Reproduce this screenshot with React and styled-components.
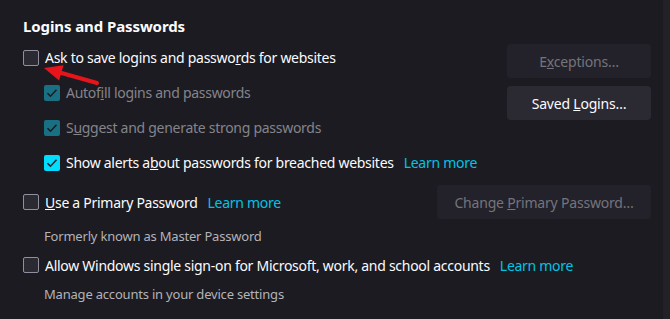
import React from 'react';
import styled, { createGlobalStyle } from 'styled-components';

const Global = createGlobalStyle`
  html, body {
    margin: 0;
    background: #1c1b22;
  }
  body {
    font-family: 'Noto Sans', 'Open Sans', sans-serif;
    color: #fbfbfe;
  }
`;

const Window = styled.div`
  display: flex;
  width: 670px;
  height: 319px;
  overflow: hidden;
  background: #1c1b22;
`;

const Main = styled.div`
  flex: 1;
  position: relative;
  box-sizing: border-box;
  padding: 15px 12px 0 23px;
`;

const Scrollbar = styled.div`
  width: 7px;
  background: #222226;
`;

const Heading = styled.h1`
  margin: 0;
  font-size: 15px;
  line-height: 22px;
  font-weight: 700;
  letter-spacing: -0.1px;
  color: #fbfbfe;
`;

const Section = styled.div`
  display: flex;
  justify-content: space-between;
  align-items: ${(p) => p.align || 'flex-start'};
  margin-top: ${(p) => p.top}px;
`;

const Options = styled.div`
  display: flex;
  flex-direction: column;
`;

const Row = styled.div`
  display: flex;
  align-items: center;
  height: ${(p) => p.h || 35}px;
  padding-left: ${(p) => (p.indent ? 21 : 0)}px;
`;

const Box = styled.span`
  box-sizing: border-box;
  width: 16px;
  height: 16px;
  flex: none;
  border-radius: 2px;
  margin-right: 6px;
  display: flex;
  align-items: center;
  justify-content: center;
  border: 1px solid ${(p) => (p.checked ? 'transparent' : '#8f8f9d')};
  background: ${(p) =>
    p.checked ? (p.disabled ? '#1a7083' : '#00ddff') : '#2b2a33'};
`;

const Label = styled.span`
  font-size: 14px;
  letter-spacing: -0.28px;
  color: ${(p) => (p.disabled ? '#85848b' : '#fbfbfe')};
  white-space: nowrap;
`;

const Link = styled.a`
  font-size: 14px;
  letter-spacing: -0.28px;
  color: #00c4e4;
  margin-left: 10px;
  text-decoration: none;
  white-space: nowrap;
`;

const Note = styled.div`
  font-size: 13px;
  letter-spacing: -0.2px;
  color: #b3b3b8;
  padding-left: 21px;
  height: ${(p) => p.h}px;
  display: flex;
  align-items: center;
`;

const Buttons = styled.div`
  display: flex;
  flex-direction: column;
  gap: 8px;
  margin-top: 4px;
`;

const Button = styled.button`
  box-sizing: border-box;
  width: ${(p) => p.w}px;
  height: 34px;
  border: none;
  border-radius: 4px;
  font-family: inherit;
  font-size: 14px;
  letter-spacing: -0.2px;
  background: ${(p) => (p.disabled ? '#23222b' : '#2b2a33')};
  color: ${(p) => (p.disabled ? '#75747b' : '#fbfbfe')};
  padding: 0;
`;

const Arrow = styled.svg`
  position: absolute;
  left: 38px;
  top: 60px;
`;

const Check = () => (
  <svg width="12" height="12" viewBox="0 0 12 12">
    <path d="M1.5 6.2 L4.5 9.2 L10.5 2.8" fill="none" stroke="#1c1b22" strokeWidth="1.6" />
  </svg>
);

const Checkbox = ({ checked, disabled }) => (
  <Box checked={checked} disabled={disabled}>
    {checked && <Check />}
  </Box>
);

const App = () => (
  <Window>
    <Global />
    <Main>
      <Heading>Logins and Passwords</Heading>
      <Section top={3}>
        <Options>
          <Row>
            <Checkbox />
            <Label>
              Ask to save logins and passwo<u>r</u>ds for websites
            </Label>
          </Row>
          <Row indent>
            <Checkbox checked disabled />
            <Label disabled>
              Autof<u>i</u>ll logins and passwords
            </Label>
          </Row>
          <Row indent>
            <Checkbox checked disabled />
            <Label disabled>
              S<u>u</u>ggest and generate strong passwords
            </Label>
          </Row>
          <Row indent>
            <Checkbox checked />
            <Label>
              Show alerts a<u>b</u>out passwords for breached websites
            </Label>
            <Link>Learn more</Link>
          </Row>
        </Options>
        <Buttons>
          <Button w={144} disabled>
            E<u>x</u>ceptions…
          </Button>
          <Button w={144}>
            Saved <u>L</u>ogins…
          </Button>
        </Buttons>
      </Section>
      <Section top={5} align="center">
        <Row h={34}>
          <Checkbox />
          <Label>
            <u>U</u>se a Primary Password
          </Label>
          <Link>Learn more</Link>
        </Row>
        <Button w={214} disabled>
          Change <u>P</u>rimary Password…
        </Button>
      </Section>
      <Note h={34}>Formerly known as Master Password</Note>
      <Row h={24}>
        <Checkbox />
        <Label>Allow Windows single sign-on for Microsoft, work, and school accounts</Label>
        <Link>Learn more</Link>
      </Row>
      <Note h={34}>Manage accounts in your device settings</Note>
      <Arrow width="70" height="30" viewBox="0 0 70 30">
        <path d="M59 23 L20 12" stroke="#e8141b" strokeWidth="4" strokeLinecap="round" />
        <path d="M6 8 L25.5 5.2 L21.1 20.6 Z" fill="#e8141b" />
      </Arrow>
    </Main>
    <Scrollbar />
  </Window>
);

export default App;
